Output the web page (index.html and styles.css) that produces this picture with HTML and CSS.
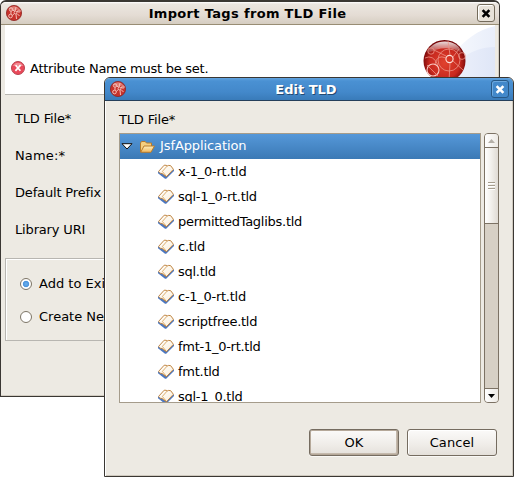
FILE: index.html
```html
<!DOCTYPE html>
<html lang="en">
<head>
<meta charset="utf-8">
<title>Edit TLD</title>
<link rel="stylesheet" href="styles.css">
</head>
<body>
<svg class="defs" aria-hidden="true">
  <defs>
    <radialGradient id="ball" cx=".5" cy=".55" r=".55"><stop offset="0" stop-color="#e0422e"/><stop offset=".65" stop-color="#c8291f"/><stop offset="1" stop-color="#6c0306"/></radialGradient>
    <linearGradient id="shine" x2="0" y2="1"><stop offset="0" stop-color="#fff" stop-opacity=".85"/><stop offset="1" stop-color="#fff" stop-opacity="0"/></linearGradient>
    <linearGradient id="page" x2="1" y2="1"><stop offset="0" stop-color="#fff"/><stop offset="1" stop-color="#fbeed8"/></linearGradient>
    <linearGradient id="folder" x2="0" y2="1"><stop offset="0" stop-color="#fff0bd"/><stop offset="1" stop-color="#f0b65c"/></linearGradient>
    <symbol id="app" viewBox="0 0 16 16">
      <circle cx="8" cy="8" r="7.6" fill="#c7322c" stroke="#8f2522" stroke-width=".8"/>
      <path d="M3 4a6 6 0 0 1 10 0L8 6z" fill="#e07c74"/>
      <g fill="none" stroke="#f6c9c2" stroke-width=".9"><circle cx="5" cy="4.5" r="1.7"/><circle cx="9.5" cy="7.5" r="1.4"/><circle cx="4.5" cy="11" r="1.8"/><circle cx="13" cy="6" r="1.2"/><path d="M5 6.2v3M6.6 4.8l2 1.6M10.8 7l1.2-.6M10 9l.5 5M6.2 10.5l2.2-2M11 8.5l2.5 2.5M9 6l1-4"/></g>
    </symbol>
    <symbol id="book" viewBox="0 0 16 15">
      <path d="M0 7.5v1.8l7 5.5h1.2L16 7V5.2L8 12z" fill="#4d78bf"/>
      <path d="M.6 7.4L6.2 1.2l2 .1 1 .6 1.5-.5 2 .3 2.7 3.6L8.2 13l-.7-1.6-1.5-.1-1.6-1.8-1.8-.1z" fill="url(#page)" stroke="#b9782f" stroke-width=".9"/>
      <path d="M9.2 2L4.4 7.4l3.4 4.4" fill="none" stroke="#d39c50" stroke-width=".8"/>
    </symbol>
  </defs>
</svg>

<section class="window back">
  <header class="titlebar">
    <svg class="app-icon"><use href="#app"/></svg>
    <h1>Import Tags from TLD File</h1>
    <button class="close" aria-label="Close"><svg viewBox="0 0 8 8"><path d="M1 1l6 6M7 1L1 7"/></svg></button>
  </header>
  <div class="banner">
    <svg class="error-icon" viewBox="0 0 14 14"><circle cx="7" cy="7" r="6.5" fill="#e94859" stroke="#b84550"/><path d="M2 5a5.5 5.5 0 0 1 10 0z" fill="#f38a92"/><path d="M4.6 4.2l4.8 5.6M9.6 4.2L4.4 9.8" stroke="#fff" stroke-width="1.7"/></svg>
    <span class="message">Attribute Name must be set.</span>
    <svg class="art" viewBox="0 0 90 69">
      <defs><linearGradient id="sky" x2="1"><stop offset="0" stop-color="#fff"/><stop offset=".55" stop-color="#f4f7fd"/><stop offset="1" stop-color="#e9eefa"/></linearGradient><linearGradient id="sky2" x2="1"><stop offset="0" stop-color="#f1f4fc"/><stop offset="1" stop-color="#dfe6f7"/></linearGradient></defs>
      <path d="M10 69C40 45 55 8 90 1v68z" fill="url(#sky)"/>
      <path d="M35 69C40 40 65 22 90 22v47z" fill="url(#sky2)"/>
      <circle cx="39.5" cy="36" r="21" fill="url(#ball)"/>
      <path d="M22 29C25 13 54 12 57 29 48 21 33 22 22 29z" fill="url(#shine)"/>
      <g fill="none" stroke="#ee9488" stroke-width=".8"><circle cx="44.5" cy="34" r="3.6" stroke="#fde0da" stroke-width="1.1"/><circle cx="28" cy="45" r="6" stroke="#f9cbc4" stroke-width="1.1"/><circle cx="26" cy="26" r="3.2"/><circle cx="57" cy="31" r="3.4"/><circle cx="44" cy="35" r="11"/><path d="M29 25l12 6M48 32l6-8M45 38l-1 18M48 36l10 9M30 39q2-10 11-6M22 40l11 11M45 30l-2-14M20 33q8-4 13 7"/></g>
    </svg>
  </div>
  <div class="form">
    <label>TLD File*</label>
    <label class="wide">Name:*</label>
    <label>Default Prefix</label>
    <label>Library URI</label>
  </div>
  <div class="group">
    <div class="option"><i class="radio on"></i>Add to Existing</div>
    <div class="option"><i class="radio"></i>Create New</div>
  </div>
</section>

<section class="window front">
  <header class="titlebar">
    <svg class="app-icon"><use href="#app"/></svg>
    <h1>Edit TLD</h1>
    <button class="close" aria-label="Close"><svg viewBox="0 0 8 8"><path d="M1 1l6 6M7 1L1 7"/></svg></button>
  </header>
  <div class="content">
    <div class="caption">TLD File*</div>
    <div class="chooser">
      <div class="tree">
        <div class="row root">
          <svg class="arrow" viewBox="0 0 12 7"><path d="M1 .7h10L6 6z" fill="#fff" stroke="#111"/></svg>
          <svg class="folder" viewBox="0 0 15 12"><path d="M.5 11V2l1-1.5h3.7L6.5 2h5v3" fill="#f5cf80" stroke="#b67b2c"/><path d="M.7 11.3L4 5h10.5L11 11.3z" fill="url(#folder)" stroke="#b67b2c"/></svg>
          <span>JsfApplication</span>
        </div>
        <div class="row"><svg class="book"><use href="#book"/></svg><span>x-1_0-rt.tld</span></div>
        <div class="row"><svg class="book"><use href="#book"/></svg><span>sql-1_0-rt.tld</span></div>
        <div class="row"><svg class="book"><use href="#book"/></svg><span>permittedTaglibs.tld</span></div>
        <div class="row"><svg class="book"><use href="#book"/></svg><span>c.tld</span></div>
        <div class="row"><svg class="book"><use href="#book"/></svg><span>sql.tld</span></div>
        <div class="row"><svg class="book"><use href="#book"/></svg><span>c-1_0-rt.tld</span></div>
        <div class="row"><svg class="book"><use href="#book"/></svg><span>scriptfree.tld</span></div>
        <div class="row"><svg class="book"><use href="#book"/></svg><span>fmt-1_0-rt.tld</span></div>
        <div class="row"><svg class="book"><use href="#book"/></svg><span>fmt.tld</span></div>
        <div class="row"><svg class="book"><use href="#book"/></svg><span>sql-1_0.tld</span></div>
      </div>
      <div class="scrollbar">
        <div class="step up"><svg viewBox="0 0 7 4"><path d="M0 4L3.5 0 7 4z" fill="#b5b0a8"/></svg></div>
        <div class="thumb"><i></i><i></i><i></i></div>
        <div class="step down"><svg viewBox="0 0 7 4"><path d="M0 0h7L3.5 4z" fill="#000"/></svg></div>
      </div>
    </div>
    <div class="actions">
      <button class="btn default">OK</button>
      <button class="btn">Cancel</button>
    </div>
  </div>
</section>
</body>
</html>
```
FILE: styles.css
```css
* { box-sizing: border-box; }
html, body { margin: 0; width: 514px; height: 477px; overflow: hidden; background: #fff; }
body { position: relative; font: 13px/16px "DejaVu Sans", sans-serif; color: #000; }
svg { display: block; flex: none; }
button { font: inherit; padding: 0; }
.defs { position: absolute; width: 0; height: 0; }

.window { position: absolute; background: #edeae3; border: 1px solid #3a3733; overflow: hidden; white-space: nowrap; }
.back { left: 0; top: 0; width: 500px; height: 397px; border-top-width: 2px; border-radius: 6px 6px 0 0; box-shadow: inset -1px -1px #d2ccc1; }
.front { left: 104px; top: 77px; width: 410px; height: 400px; border-radius: 6px 6px 0 0; box-shadow: inset 1px 0 #fff, inset -1px -1px #cfc9be; }

.titlebar { display: flex; align-items: center; height: 23px; padding: 0 4px 0 5px; }
.titlebar h1 { flex: 1; margin: 0; font-size: 13px; line-height: 16px; font-weight: bold; text-align: center; }
.back .titlebar { background: linear-gradient(#fff 0, #ebe6e0 2px, #e4dcd4 60%, #d5cdc1); border-bottom: 1px solid #988d74; }
.back .titlebar h1 { letter-spacing: .33px; padding: 1px 4px 0 0; }
.front .titlebar { background: linear-gradient(#62a3df 0, #4a91d3 3px, #4388ca 65%, #397bb9); border-bottom: 1px solid #253f5a; color: #fff; }
.front .titlebar h1 { padding: 1px 5px 0 0; text-shadow: 1px 1px #244a72; }
.app-icon { width: 16px; height: 16px; }
.close { display: flex; align-items: center; justify-content: center; width: 18px; height: 18px; border: 1px solid #746b5b; border-radius: 3px; background: #e8e2d9; box-shadow: inset 1px 1px #fff; }
.close svg { width: 10px; height: 9px; }
.close path { stroke: #000; stroke-width: 2.3; fill: none; }
.front .close { background: #4288ca; border-color: #275886; box-shadow: inset 1px 1px #6ba8df; }
.front .close path { stroke: #fff; }

.banner { display: flex; align-items: flex-end; height: 70px; margin: 0 4px; background: #fff; border-bottom: 1px solid #b9b7b2; }
.error-icon { width: 14px; height: 14px; margin: 0 5px 19px 6px; }
.message { margin-bottom: 17px; letter-spacing: -.26px; }
.art { width: 90px; height: 69px; margin-left: auto; }
.form { display: grid; grid-auto-rows: 37px; height: 163px; padding: 16px 14px 0; letter-spacing: -.16px; }
.form .wide { letter-spacing: .15px; }
.group { margin: 0 4px; height: 83px; border: 1px solid #b8b6b1; box-shadow: inset 1px 1px #fff; padding: 17px 14px 0; }
.option { display: flex; align-items: center; height: 16px; margin-bottom: 17px; }
.radio { width: 12px; height: 12px; border: 1px solid #7d7566; border-radius: 50%; background: #fff; margin-right: 7px; flex: none; }
.radio.on { background: radial-gradient(circle, #6cb0ee 0, #4b94dc 2.8px, #fff 3.6px); }

.content { padding: 11px 14px 0; }
.caption { height: 21px; letter-spacing: -.16px; }
.chooser { display: flex; gap: 3px; height: 270px; }
.tree { width: 362px; border: 1px solid #a59c8b; background: #fff; overflow: hidden; letter-spacing: -.27px; }
.row { display: flex; align-items: center; height: 25px; padding-left: 38px; }
.row.root { padding-left: 1px; background: linear-gradient(#5598d9, #3b79b5); color: #fff; letter-spacing: -.1px; }
.root span { margin-top: -1px; }
.arrow { width: 12px; height: 7px; margin-right: 7px; }
.folder { width: 15px; height: 12px; margin-right: 5px; }
.book { width: 16px; height: 15px; margin-right: 4px; }

.scrollbar { display: flex; flex-direction: column; width: 15px; border: 1px solid #7c7264; border-radius: 4px; background: #d7d0c5; overflow: hidden; }
.step { display: flex; align-items: center; justify-content: center; height: 13px; background: linear-gradient(90deg, #fff, #edeae5); }
.step.down { margin-top: auto; height: 14px; border-top: 1px solid #7c7264; }
.step svg { width: 7px; height: 4px; }
.thumb { display: flex; flex-direction: column; align-items: center; justify-content: center; gap: 1px; height: 77px; border: solid #7c7264; border-width: 1px 0; background: linear-gradient(90deg, #fff, #f3f1ed 45%, #e0dbd4); }
.thumb i { width: 7px; height: 2px; border-top: 1px solid #a69d8e; background: #fff; }

.actions { display: flex; justify-content: flex-end; gap: 8px; margin-top: 26px; padding-right: 2px; }
.btn { width: 90px; height: 27px; border: 1px solid #756c60; border-radius: 3px; background: linear-gradient(#fbfaf9, #efece8 60%, #e4e0da); box-shadow: inset 1px 1px #fff, 0 1px #f9f8f5; color: #000; letter-spacing: .1px; }
.btn.default { box-shadow: inset 0 0 0 1px #b5a899, inset -1px -1px 0 1px #c4b9ac, 0 1px #f9f8f5; }
```
